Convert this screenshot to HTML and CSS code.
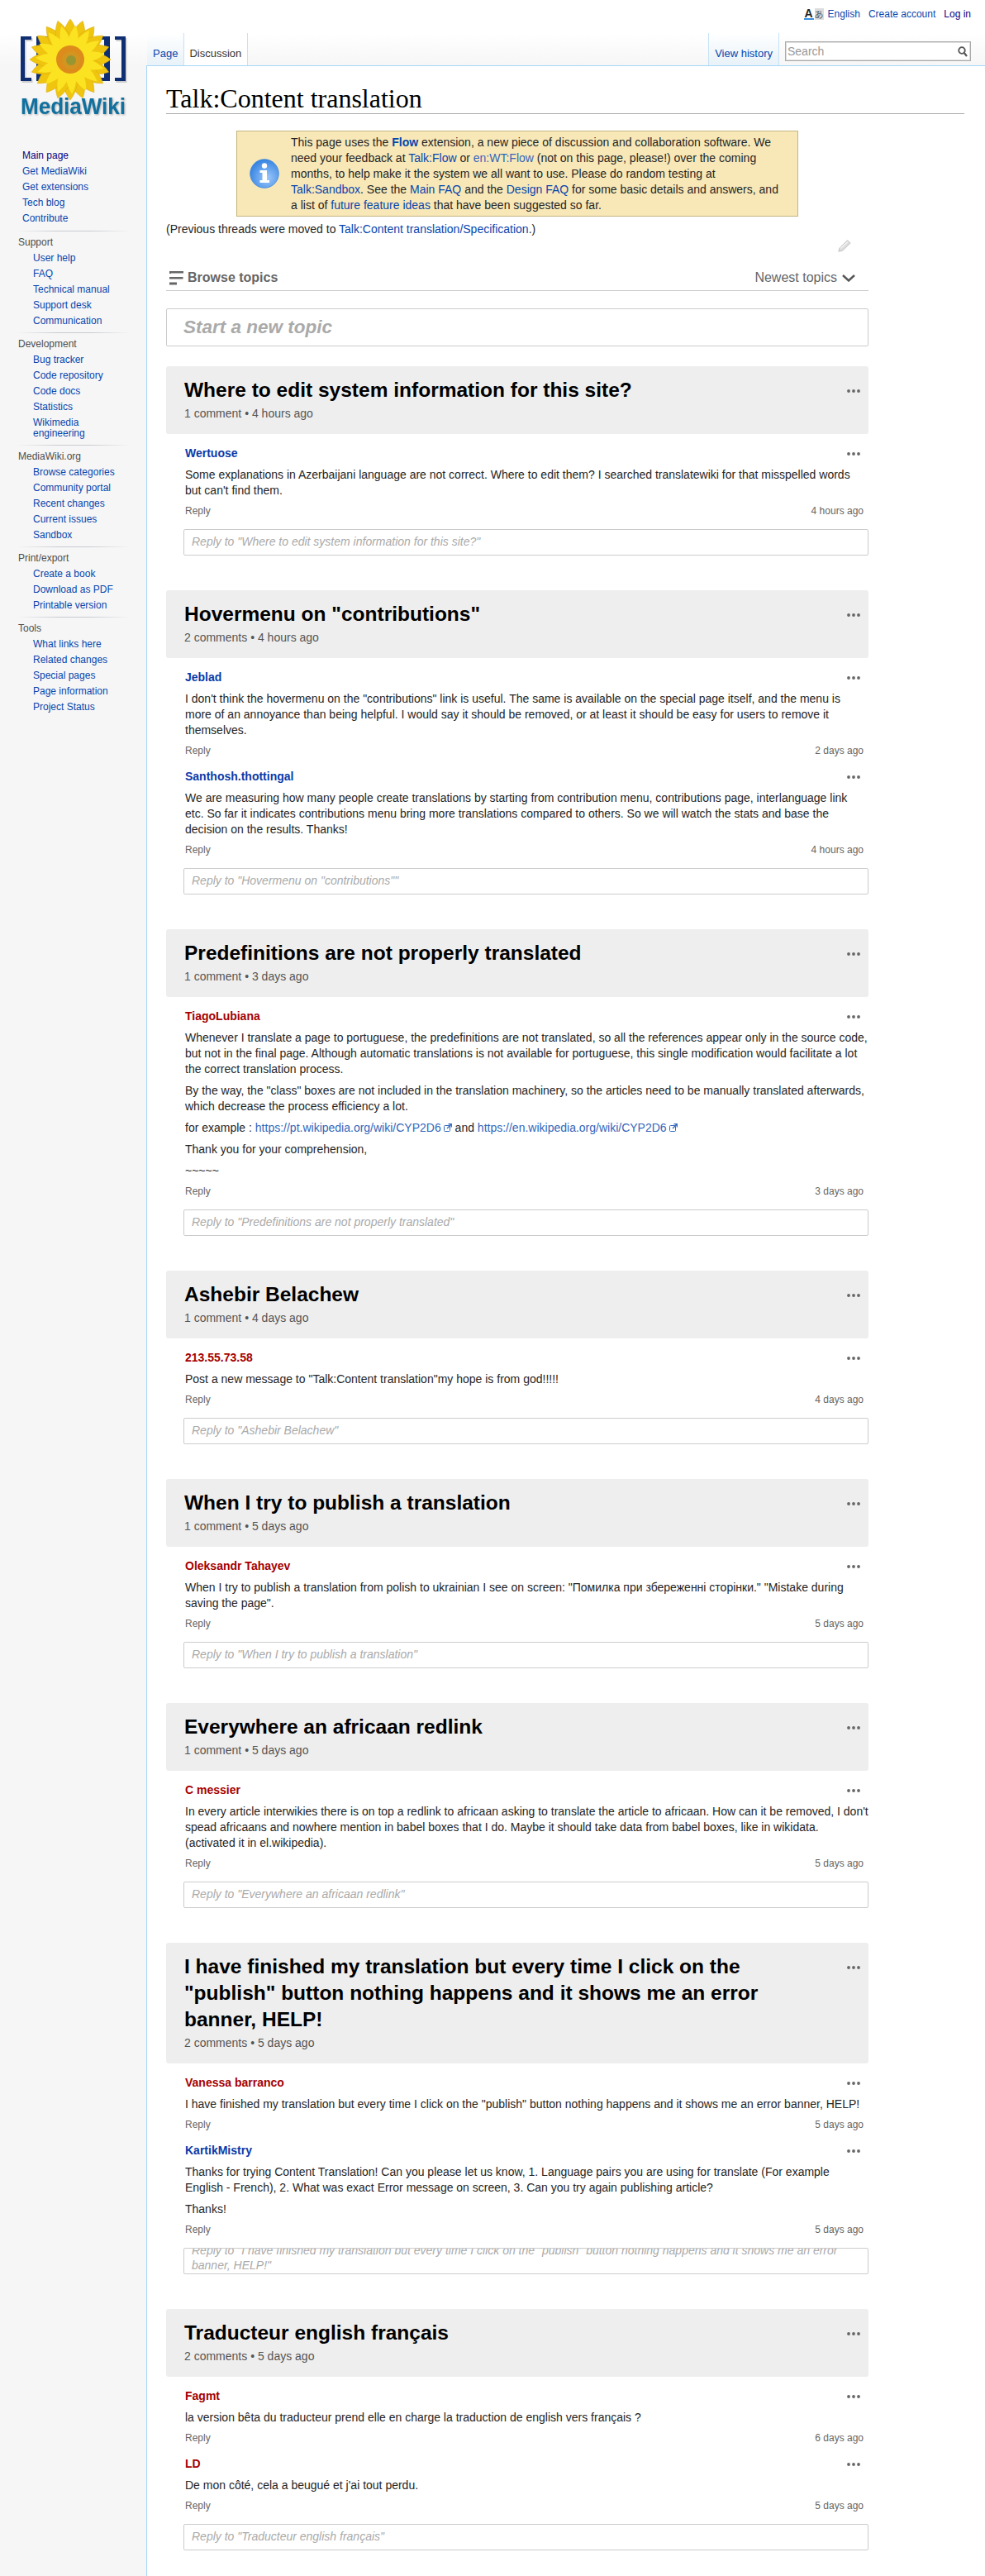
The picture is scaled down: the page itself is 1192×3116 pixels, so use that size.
FILE: index.html
```html
<!DOCTYPE html>
<html lang="en">
<head>
    <meta charset="UTF-8">
    <meta name="viewport" content="width=device-width, initial-scale=1.0">
    <title>Talk:Content translation - MediaWiki</title>
    <link rel="stylesheet" href="styles.css">
</head>
<body>
    <svg class="icon-defs" width="0" height="0">
        <defs>
            <symbol id="dots" viewBox="0 0 16 4">
                <circle cx="2" cy="2" r="1.9"/>
                <circle cx="8" cy="2" r="1.9"/>
                <circle cx="14" cy="2" r="1.9"/>
            </symbol>
            <symbol id="external" viewBox="0 0 10 10">
                <rect x="0.5" y="2.5" width="7" height="7" rx="1" fill="none" stroke="#36b" stroke-width="1"/>
                <path d="M4 6 L9 1 M5.5 0.7 H9.3 V4.5" fill="none" stroke="#36b" stroke-width="1.3"/>
            </symbol>
            <path id="petal" d="M85 72 C72 54 75 36 85 23 C95 36 98 54 85 72 Z"/>
            <path id="petal-short" d="M85 72 C76 56 78 42 85 30 C92 42 94 56 85 72 Z"/>
        </defs>
    </svg>

    <div class="page">
        <aside class="sidebar">
            <div class="logo">
                <svg width="177" height="150" viewBox="0 0 177 150">
                    <g fill="#999" opacity="0.45" transform="translate(1.5 2)">
                        <path d="M25 44H38V48H30V94H38V98H25Z"/>
                        <path d="M152 44H139V48H147V94H139V98H152Z"/>
                    </g>
                    <g fill="#0f2f72">
                        <path d="M25 44H38V48H30V94H38V98H25Z"/>
                        <path d="M44 44H59V48H51V94H59V98H44Z"/>
                        <path d="M133 44H116V48H126V94H116V98H133Z"/>
                        <path d="M152 44H139V48H147V94H139V98H152Z"/>
                    </g>
                    <g fill="#efc50f" stroke="#d9a90c" stroke-width="0.5">
                        <use href="#petal"/>
                        <use href="#petal" transform="rotate(18 85 72)"/>
                        <use href="#petal" transform="rotate(36 85 72)"/>
                        <use href="#petal" transform="rotate(54 85 72)"/>
                        <use href="#petal" transform="rotate(72 85 72)"/>
                        <use href="#petal" transform="rotate(90 85 72)"/>
                        <use href="#petal" transform="rotate(108 85 72)"/>
                        <use href="#petal" transform="rotate(126 85 72)"/>
                        <use href="#petal" transform="rotate(144 85 72)"/>
                        <use href="#petal" transform="rotate(162 85 72)"/>
                        <use href="#petal" transform="rotate(180 85 72)"/>
                        <use href="#petal" transform="rotate(198 85 72)"/>
                        <use href="#petal" transform="rotate(216 85 72)"/>
                        <use href="#petal" transform="rotate(234 85 72)"/>
                        <use href="#petal" transform="rotate(252 85 72)"/>
                        <use href="#petal" transform="rotate(270 85 72)"/>
                        <use href="#petal" transform="rotate(288 85 72)"/>
                        <use href="#petal" transform="rotate(306 85 72)"/>
                        <use href="#petal" transform="rotate(324 85 72)"/>
                        <use href="#petal" transform="rotate(342 85 72)"/>
                    </g>
                    <g fill="#fbe322">
                        <use href="#petal-short" transform="rotate(9 85 72)"/>
                        <use href="#petal-short" transform="rotate(33 85 72)"/>
                        <use href="#petal-short" transform="rotate(57 85 72)"/>
                        <use href="#petal-short" transform="rotate(81 85 72)"/>
                        <use href="#petal-short" transform="rotate(105 85 72)"/>
                        <use href="#petal-short" transform="rotate(129 85 72)"/>
                        <use href="#petal-short" transform="rotate(153 85 72)"/>
                        <use href="#petal-short" transform="rotate(177 85 72)"/>
                        <use href="#petal-short" transform="rotate(201 85 72)"/>
                        <use href="#petal-short" transform="rotate(225 85 72)"/>
                        <use href="#petal-short" transform="rotate(249 85 72)"/>
                        <use href="#petal-short" transform="rotate(273 85 72)"/>
                        <use href="#petal-short" transform="rotate(297 85 72)"/>
                        <use href="#petal-short" transform="rotate(321 85 72)"/>
                        <use href="#petal-short" transform="rotate(345 85 72)"/>
                    </g>
                    <circle cx="85" cy="72" r="17" fill="#dd8c1c"/>
                    <circle cx="86" cy="73" r="11" fill="#d3951f"/>
                    <circle cx="86" cy="73" r="6" fill="#989632"/>
                    <text class="logo-text" x="25" y="138" textLength="127" lengthAdjust="spacingAndGlyphs">MediaWiki</text>
                </svg>
            </div>
            <ul class="nav-main">
                <li><a class="visited" href="#">Main page</a></li>
                <li><a href="#">Get MediaWiki</a></li>
                <li><a href="#">Get extensions</a></li>
                <li><a href="#">Tech blog</a></li>
                <li><a href="#">Contribute</a></li>
            </ul>
            <div class="nav-section">
                <h3>Support</h3>
                <ul>
                    <li><a href="#">User help</a></li>
                    <li><a href="#">FAQ</a></li>
                    <li><a href="#">Technical manual</a></li>
                    <li><a href="#">Support desk</a></li>
                    <li><a href="#">Communication</a></li>
                </ul>
            </div>
            <div class="nav-section">
                <h3>Development</h3>
                <ul>
                    <li><a href="#">Bug tracker</a></li>
                    <li><a href="#">Code repository</a></li>
                    <li><a href="#">Code docs</a></li>
                    <li><a href="#">Statistics</a></li>
                    <li><a href="#">Wikimedia engineering</a></li>
                </ul>
            </div>
            <div class="nav-section">
                <h3>MediaWiki.org</h3>
                <ul>
                    <li><a href="#">Browse categories</a></li>
                    <li><a href="#">Community portal</a></li>
                    <li><a href="#">Recent changes</a></li>
                    <li><a href="#">Current issues</a></li>
                    <li><a href="#">Sandbox</a></li>
                </ul>
            </div>
            <div class="nav-section">
                <h3>Print/export</h3>
                <ul>
                    <li><a href="#">Create a book</a></li>
                    <li><a href="#">Download as PDF</a></li>
                    <li><a href="#">Printable version</a></li>
                </ul>
            </div>
            <div class="nav-section">
                <h3>Tools</h3>
                <ul>
                    <li><a href="#">What links here</a></li>
                    <li><a href="#">Related changes</a></li>
                    <li><a href="#">Special pages</a></li>
                    <li><a href="#">Page information</a></li>
                    <li><a href="#">Project Status</a></li>
                </ul>
            </div>
        </aside>

        <div class="main">
            <div class="personal">
                <span class="lang-icon"><span class="lang-a">A</span><span class="lang-ja">あ</span></span>
                <a href="#">English</a>
                <a href="#">Create account</a>
                <a class="visited" href="#">Log in</a>
            </div>
            <div class="tabs">
                <a class="tab" href="#">Page</a>
                <span class="tab tab-selected">Discussion</span>
                <span class="tabs-gap"></span>
                <a class="tab" href="#">View history</a>
                <div class="search">
                    <input type="text" placeholder="Search">
                    <svg class="search-icon" width="12" height="13" viewBox="0 0 12 13">
                        <circle cx="5" cy="5" r="3.8" fill="none" stroke="#555" stroke-width="1.8"/>
                        <path d="M7.8 8 L11 12" stroke="#555" stroke-width="2.2"/>
                    </svg>
                </div>
            </div>

            <div class="content">
                <h1 class="page-title">Talk:Content translation</h1>
                <div class="board">
                    <div class="notice">
                        <svg class="notice-icon" width="36" height="36" viewBox="0 0 36 36">
                            <defs>
                                <radialGradient id="info-blue" cx="0.6" cy="0.65" r="0.7">
                                    <stop offset="0" stop-color="#9cc8fb"/>
                                    <stop offset="1" stop-color="#2f7fe0"/>
                                </radialGradient>
                            </defs>
                            <circle cx="18" cy="18" r="17.3" fill="url(#info-blue)" stroke="#3d86dc" stroke-width="0.8"/>
                            <circle cx="18" cy="8.5" r="3.2" fill="#fff"/>
                            <path d="M12.5 14H21V26H24V29H12.5V26H15.5V17H12.5Z" fill="#fff"/>
                        </svg>
                        <p>This page uses the <a class="strong" href="#">Flow</a> extension, a new piece of discussion and collaboration software. We need your feedback at <a href="#">Talk:Flow</a> or <a class="ext" href="#">en:WT:Flow</a> (not on this page, please!) over the coming months, to help make it the system we all want to use. Please do random testing at <a href="#">Talk:Sandbox</a>. See the <a href="#">Main FAQ</a> and the <a href="#">Design FAQ</a> for some basic details and answers, and a list of <a href="#">future feature ideas</a> that have been suggested so far.</p>
                    </div>
                    <p class="moved">(Previous threads were moved to <a href="#">Talk:Content translation/Specification</a>.)</p>
                    <div class="edit-row">
                        <svg width="16" height="15" viewBox="0 0 16 15">
                            <path d="M0.8 14.2 L2 10 L11.5 0.8 L15.2 4 L5.5 13.2 Z" fill="#ddd" stroke="#c4c4c4" stroke-width="1"/>
                            <path d="M3 10.5 L12 2.5" stroke="#f4f4f4" stroke-width="1.4"/>
                        </svg>
                    </div>
                    <div class="browse">
                        <span class="browse-left">
                            <svg width="17" height="17" viewBox="0 0 17 17">
                                <path d="M0 0H17V2.5H2V3H0Z M0 7H16.5V9.5H0Z M0 13.5H9V16.5H0Z" fill="#666"/>
                            </svg>
                            Browse topics
                        </span>
                        <span class="browse-sort">
                            Newest topics
                            <svg width="16" height="9" viewBox="0 0 16 9">
                                <path d="M1 1 L8 7.5 L15 1" fill="none" stroke="#555" stroke-width="2.4"/>
                            </svg>
                        </span>
                    </div>
                    <div class="new-topic">Start a new topic</div>

                    <section class="topic">
                        <header class="topic-head">
                            <div>
                                <h2>Where to edit system information for this site?</h2>
                                <div class="meta">1 comment • 4 hours ago</div>
                            </div>
                            <svg class="dots"><use href="#dots"/></svg>
                        </header>
                        <article class="post">
                            <div class="author-row"><a class="author" href="#">Wertuose</a><svg class="dots"><use href="#dots"/></svg></div>
                            <div class="body">
                                <p>Some explanations in Azerbaijani language are not correct. Where to edit them? I searched translatewiki for that misspelled words but can't find them.</p>
                            </div>
                            <div class="actions"><span>Reply</span><span>4 hours ago</span></div>
                        </article>
                        <div class="reply-box">Reply to "Where to edit system information for this site?"</div>
                    </section>

                    <section class="topic">
                        <header class="topic-head">
                            <div>
                                <h2>Hovermenu on "contributions"</h2>
                                <div class="meta">2 comments • 4 hours ago</div>
                            </div>
                            <svg class="dots"><use href="#dots"/></svg>
                        </header>
                        <article class="post">
                            <div class="author-row"><a class="author" href="#">Jeblad</a><svg class="dots"><use href="#dots"/></svg></div>
                            <div class="body">
                                <p>I don't think the hovermenu on the "contributions" link is useful. The same is available on the special page itself, and the menu is more of an annoyance than being helpful. I would say it should be removed, or at least it should be easy for users to remove it themselves.</p>
                            </div>
                            <div class="actions"><span>Reply</span><span>2 days ago</span></div>
                        </article>
                        <article class="post">
                            <div class="author-row"><a class="author" href="#">Santhosh.thottingal</a><svg class="dots"><use href="#dots"/></svg></div>
                            <div class="body">
                                <p>We are measuring how many people create translations by starting from contribution menu, contributions page, interlanguage link etc. So far it indicates contributions menu bring more translations compared to others. So we will watch the stats and base the decision on the results. Thanks!</p>
                            </div>
                            <div class="actions"><span>Reply</span><span>4 hours ago</span></div>
                        </article>
                        <div class="reply-box">Reply to "Hovermenu on "contributions""</div>
                    </section>

                    <section class="topic">
                        <header class="topic-head">
                            <div>
                                <h2>Predefinitions are not properly translated</h2>
                                <div class="meta">1 comment • 3 days ago</div>
                            </div>
                            <svg class="dots"><use href="#dots"/></svg>
                        </header>
                        <article class="post">
                            <div class="author-row"><a class="author new" href="#">TiagoLubiana</a><svg class="dots"><use href="#dots"/></svg></div>
                            <div class="body">
                                <p>Whenever I translate a page to portuguese, the predefinitions are not translated, so all the references appear only in the source code, but not in the final page. Although automatic translations is not available for portuguese, this single modification would facilitate a lot the correct translation process.</p>
                                <p>By the way, the "class" boxes are not included in the translation machinery, so the articles need to be manually translated afterwards, which decrease the process efficiency a lot.</p>
                                <p>for example : <a class="ext" href="#">https://pt.wikipedia.org/wiki/CYP2D6</a><svg class="ext-icon"><use href="#external"/></svg> and <a class="ext" href="#">https://en.wikipedia.org/wiki/CYP2D6</a><svg class="ext-icon"><use href="#external"/></svg></p>
                                <p>Thank you for your comprehension,</p>
                                <p>~~~~~</p>
                            </div>
                            <div class="actions"><span>Reply</span><span>3 days ago</span></div>
                        </article>
                        <div class="reply-box">Reply to "Predefinitions are not properly translated"</div>
                    </section>

                    <section class="topic">
                        <header class="topic-head">
                            <div>
                                <h2>Ashebir Belachew</h2>
                                <div class="meta">1 comment • 4 days ago</div>
                            </div>
                            <svg class="dots"><use href="#dots"/></svg>
                        </header>
                        <article class="post">
                            <div class="author-row"><a class="author new" href="#">213.55.73.58</a><svg class="dots"><use href="#dots"/></svg></div>
                            <div class="body">
                                <p>Post a new message to "Talk:Content translation"my hope is from god!!!!!</p>
                            </div>
                            <div class="actions"><span>Reply</span><span>4 days ago</span></div>
                        </article>
                        <div class="reply-box">Reply to "Ashebir Belachew"</div>
                    </section>

                    <section class="topic">
                        <header class="topic-head">
                            <div>
                                <h2>When I try to publish a translation</h2>
                                <div class="meta">1 comment • 5 days ago</div>
                            </div>
                            <svg class="dots"><use href="#dots"/></svg>
                        </header>
                        <article class="post">
                            <div class="author-row"><a class="author new" href="#">Oleksandr Tahayev</a><svg class="dots"><use href="#dots"/></svg></div>
                            <div class="body">
                                <p>When I try to publish a translation from polish to ukrainian I see on screen: "Помилка при збереженні сторінки." "Mistake during saving the page".</p>
                            </div>
                            <div class="actions"><span>Reply</span><span>5 days ago</span></div>
                        </article>
                        <div class="reply-box">Reply to "When I try to publish a translation"</div>
                    </section>

                    <section class="topic">
                        <header class="topic-head">
                            <div>
                                <h2>Everywhere an africaan redlink</h2>
                                <div class="meta">1 comment • 5 days ago</div>
                            </div>
                            <svg class="dots"><use href="#dots"/></svg>
                        </header>
                        <article class="post">
                            <div class="author-row"><a class="author new" href="#">C messier</a><svg class="dots"><use href="#dots"/></svg></div>
                            <div class="body">
                                <p>In every article interwikies there is on top a redlink to africaan asking to translate the article to africaan. How can it be removed, I don't spead africaans and nowhere mention in babel boxes that I do. Maybe it should take data from babel boxes, like in wikidata. (activated it in el.wikipedia).</p>
                            </div>
                            <div class="actions"><span>Reply</span><span>5 days ago</span></div>
                        </article>
                        <div class="reply-box">Reply to "Everywhere an africaan redlink"</div>
                    </section>

                    <section class="topic">
                        <header class="topic-head">
                            <div>
                                <h2>I have finished my translation but every time I click on the "publish" button nothing happens and it shows me an error banner, HELP!</h2>
                                <div class="meta">2 comments • 5 days ago</div>
                            </div>
                            <svg class="dots"><use href="#dots"/></svg>
                        </header>
                        <article class="post">
                            <div class="author-row"><a class="author new" href="#">Vanessa barranco</a><svg class="dots"><use href="#dots"/></svg></div>
                            <div class="body">
                                <p>I have finished my translation but every time I click on the "publish" button nothing happens and it shows me an error banner, HELP!</p>
                            </div>
                            <div class="actions"><span>Reply</span><span>5 days ago</span></div>
                        </article>
                        <article class="post">
                            <div class="author-row"><a class="author" href="#">KartikMistry</a><svg class="dots"><use href="#dots"/></svg></div>
                            <div class="body">
                                <p>Thanks for trying Content Translation! Can you please let us know, 1. Language pairs you are using for translate (For example English - French), 2. What was exact Error message on screen, 3. Can you try again publishing article?</p>
                                <p>Thanks!</p>
                            </div>
                            <div class="actions"><span>Reply</span><span>5 days ago</span></div>
                        </article>
                        <div class="reply-box reply-clipped"><span>Reply to "I have finished my translation but every time I click on the "publish" button nothing happens and it shows me an error banner, HELP!"</span></div>
                    </section>

                    <section class="topic">
                        <header class="topic-head">
                            <div>
                                <h2>Traducteur english français</h2>
                                <div class="meta">2 comments • 5 days ago</div>
                            </div>
                            <svg class="dots"><use href="#dots"/></svg>
                        </header>
                        <article class="post">
                            <div class="author-row"><a class="author new" href="#">Fagmt</a><svg class="dots"><use href="#dots"/></svg></div>
                            <div class="body">
                                <p>la version bêta du traducteur prend elle en charge la traduction de english vers français ?</p>
                            </div>
                            <div class="actions"><span>Reply</span><span>6 days ago</span></div>
                        </article>
                        <article class="post">
                            <div class="author-row"><a class="author new" href="#">LD</a><svg class="dots"><use href="#dots"/></svg></div>
                            <div class="body">
                                <p>De mon côté, cela a beugué et j'ai tout perdu.</p>
                            </div>
                            <div class="actions"><span>Reply</span><span>5 days ago</span></div>
                        </article>
                        <div class="reply-box">Reply to "Traducteur english français"</div>
                    </section>
                </div>
            </div>
        </div>
    </div>
</body>
</html>
```

FILE: styles.css
```css
html, body {
    height: 100%;
}

body {
    margin: 0;
    font-family: "Liberation Sans", Arial, sans-serif;
    font-size: 14px;
    color: #252525;
    background: linear-gradient(#fff 40px, #f6f6f6 80px) no-repeat;
    background-color: #f6f6f6;
}

a {
    color: #0645ad;
    text-decoration: none;
}

a.visited {
    color: #0b0080;
}

a.ext {
    color: #36b;
}

a.strong {
    font-weight: bold;
}

p {
    margin: 0;
}

.icon-defs {
    position: absolute;
}

.page {
    display: flex;
    height: 3116px;
    overflow: hidden;
}

/* sidebar */
.sidebar {
    width: 177px;
    flex-shrink: 0;
    font-size: 12px;
}

.logo {
    height: 179px;
}

.logo svg {
    display: block;
}

.logo-text {
    font-family: "Liberation Sans", Arial, sans-serif;
    font-size: 28px;
    font-weight: bold;
    fill: #10709f;
    filter: drop-shadow(1px 1px 1px #aaa);
}

.sidebar ul {
    list-style: none;
    margin: 0;
    padding: 0;
}

.sidebar li {
    padding: 3px 0;
    line-height: 13px;
}

.nav-main {
    padding-left: 27px !important;
    padding-bottom: 5px !important;
}

.nav-section {
    margin-left: 20px;
    width: 138px;
    padding: 5px 0 4px;
    background: linear-gradient(to right, rgba(200, 204, 209, 0), #c8ccd1 35%, #c8ccd1 65%, rgba(200, 204, 209, 0)) no-repeat top / 100% 1px;
}

.nav-section h3 {
    margin: 0;
    padding-left: 2px;
    font-size: 12px;
    font-weight: normal;
    line-height: 19px;
    color: #4d4d4d;
}

.nav-section ul {
    padding-left: 20px;
}

/* top of the page */
.main {
    flex: 1;
    min-width: 0;
}

.personal {
    height: 34px;
    box-sizing: border-box;
    padding-right: 17px;
    display: flex;
    justify-content: flex-end;
    align-items: center;
    gap: 10px;
    margin-bottom: 6px;
    font-size: 12px;
}

.lang-icon {
    display: flex;
    gap: 1px;
    height: 14px;
    margin-right: -5px;
    font-size: 11px;
    line-height: 14px;
    text-align: center;
}

.lang-a {
    width: 12px;
    font-weight: bold;
    font-size: 14px;
    color: #222;
    border-bottom: 2px solid #3a8ee0;
    height: 12px;
    line-height: 13px;
}

.lang-ja {
    width: 11px;
    background: #ddd;
    font-family: "Noto Sans CJK JP", sans-serif;
    color: #555;
}

.tabs {
    height: 40px;
    box-sizing: border-box;
    display: flex;
    padding-left: 1px;
    font-size: 13px;
    border-bottom: 1px solid #a7d7f9;
}

.tab {
    padding: 17px 7px 0;
    line-height: 16px;
    background: linear-gradient(#fff, #e8f2f8);
    border-right: 1px solid #c6e2f6;
}

.tab-selected {
    color: #333;
    background: #fff;
    padding-left: 6px;
}

.tabs-gap {
    flex: 1;
    border-right: 1px solid #c6e2f6;
}

.search {
    position: relative;
    margin: 10px 17px 0 7px;
    width: 225px;
}

.search input {
    width: 100%;
    height: 24px;
    box-sizing: border-box;
    margin: 0;
    padding: 0 2px;
    font-family: inherit;
    font-size: 14px;
    border: 1px solid #aaa;
    outline: 1px solid #ddd;
    outline-offset: -2px;
    background: #fff;
}

.search input::placeholder {
    color: #999;
}

.search-icon {
    position: absolute;
    top: 6px;
    right: 4px;
}

/* content */
.content {
    background: #fff;
    border-left: 1px solid #a7d7f9;
    padding: 0 25px 0 23px;
    min-height: 3036px;
    box-sizing: border-box;
}

.page-title {
    margin: 0;
    padding-top: 20px;
    height: 37px;
    font-family: "Liberation Serif", "Times New Roman", serif;
    font-size: 32px;
    font-weight: normal;
    line-height: 38px;
    color: #000;
    border-bottom: 1px solid #aaa;
}

.board {
    width: 850px;
}

.notice {
    display: flex;
    align-items: center;
    width: 680px;
    box-sizing: border-box;
    height: 104px;
    margin: 20px 0 0 85px;
    padding: 4px 17px 4px 15px;
    line-height: 19px;
    background: #f8e8b8;
    border: 1px solid #c2b57f;
}

.notice-icon {
    flex-shrink: 0;
    margin-right: 14px;
}

.moved {
    margin-top: 6px;
    line-height: 19px;
}

.edit-row {
    display: flex;
    justify-content: flex-end;
    padding: 3px 21px 0 0;
    height: 17px;
}

.browse {
    display: flex;
    justify-content: space-between;
    align-items: center;
    height: 30px;
    margin-top: 14px;
    padding-left: 4px;
    padding-right: 16px;
    font-size: 16px;
    color: #666;
    border-bottom: 1px solid #ccc;
}

.browse-left {
    display: flex;
    align-items: center;
    gap: 5px;
    font-weight: bold;
}

.browse-sort {
    display: flex;
    align-items: center;
    gap: 6px;
}

.new-topic {
    margin-top: 21px;
    height: 46px;
    box-sizing: border-box;
    padding-left: 20px;
    font-size: 22.5px;
    font-style: italic;
    font-weight: bold;
    line-height: 44px;
    color: #aaa;
    border: 1px solid #ccc;
    border-radius: 2px;
}

/* topics */
.topic {
    margin-top: 24px;
    margin-bottom: 42px;
}

.topic-head {
    display: flex;
    justify-content: space-between;
    padding: 13px 10px 15px 22px;
    background: #eee;
    border-radius: 3px;
}

.topic-head h2 {
    margin: 0;
    max-width: 760px;
    font-size: 24.5px;
    line-height: 32px;
    color: #000;
}

.meta {
    margin-top: 3px;
    line-height: 19px;
    color: #555;
}

.dots {
    flex-shrink: 0;
    width: 16px;
    height: 4px;
    fill: #666;
}

.topic-head .dots {
    margin-top: 15px;
}

.post {
    margin: 12px 0 12px 23px;
}

.topic-head + .post {
    margin-top: 14px;
}

.author-row {
    display: flex;
    justify-content: space-between;
    align-items: center;
    padding-right: 10px;
    line-height: 19px;
}

.author {
    font-weight: bold;
    color: #0b3aa8;
}

.author.new {
    color: #a50000;
}

.body {
    margin-top: 7px;
    line-height: 19px;
}

.body p {
    margin-bottom: 7px;
}

.body p:last-child {
    margin-bottom: 6px;
}

.ext-icon {
    width: 10px;
    height: 10px;
    margin-left: 3px;
}

.actions {
    display: flex;
    justify-content: space-between;
    padding-right: 6px;
    font-size: 12px;
    line-height: 19px;
    color: #666;
}

.reply-box {
    margin: 12px 0 0 21px;
    height: 32px;
    box-sizing: border-box;
    padding: 0 9px;
    overflow: hidden;
    font-size: 14px;
    font-style: italic;
    line-height: 28px;
    color: #aaa;
    border: 1px solid #ccc;
    border-radius: 2px;
}

.reply-clipped {
    display: flex;
    align-items: flex-end;
    line-height: 18px;
    padding-bottom: 1px;
}
```
